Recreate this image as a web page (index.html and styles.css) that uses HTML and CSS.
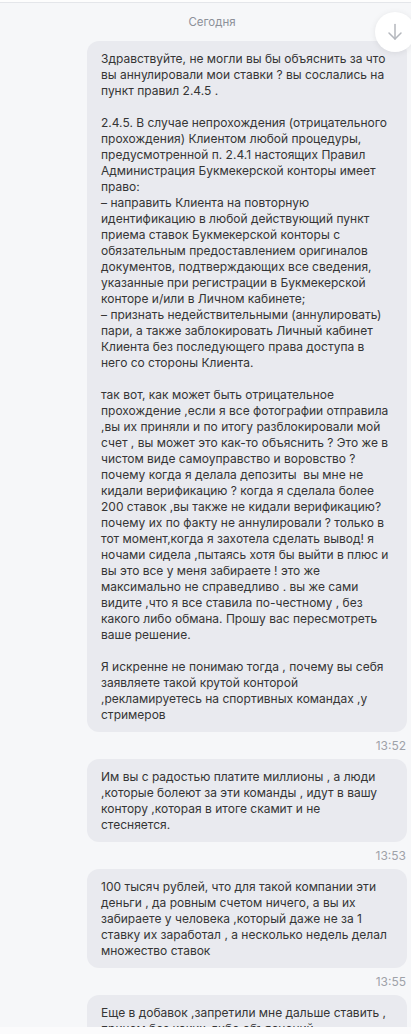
FILE: index.html
```
<!DOCTYPE html>
<html lang="ru">
<head>
	<meta charset="utf-8"/>
	<title>Чат поддержки</title>
	<meta name="viewport" content="width=411"/>
	<link rel="stylesheet" href="styles.css">
</head>
<body>
	<div id="chat">
		<div id="topline"></div>
		<div id="feed">
			<div class="day">Сегодня</div>
			<div id="tobottom">
				<svg width="16" height="18" viewBox="0 0 16 18" fill="none" stroke="#b4b7bd" stroke-width="1.5" stroke-linecap="round" stroke-linejoin="round">
					<path d="M8 1.5 V16"/>
					<path d="M2 10 L8 16 L14 10"/>
				</svg>
			</div>

			<div class="msg">
				<div class="bubble">
					<p>Здравствуйте, не могли вы бы объяснить за что вы аннулировали мои ставки ? вы сослались на пункт правил 2.4.5 .</p>
					<p>2.4.5. В случае непрохождения (отрицательного прохождения) Клиентом любой процедуры, предусмотренной п. 2.4.1 настоящих Правил Администрация Букмекерской конторы имеет право:<br/>– направить Клиента на повторную идентификацию в любой действующий пункт приема ставок Букмекерской конторы с обязательным предоставлением оригиналов документов, подтверждающих все сведения, указанные при регистрации в Букмекерской конторе и/или в Личном кабинете;<br/>– признать недействительными (аннулировать) пари, а также заблокировать Личный кабинет Клиента без последующего права доступа в него со стороны Клиента.</p>
					<p>так вот, как может быть отрицательное прохождение ,если я все фотографии отправила ,вы их приняли и по итогу разблокировали мой счет , вы может это как-то объяснить ? Это же в чистом виде самоуправство и воровство ? почему когда я делала депозиты&nbsp; вы мне не кидали верификацию ? когда я сделала более 200 ставок ,вы также не кидали верификацию? почему их по факту не аннулировали ? только в тот момент,когда я захотела сделать вывод! я ночами сидела ,пытаясь хотя бы выйти в плюс и вы это все у меня забираете ! это же максимально не справедливо . вы же сами видите ,что я все ставила по-честному , без какого либо обмана. Прошу вас пересмотреть ваше решение.</p>
					<p>Я искренне не понимаю тогда , почему вы себя заявляете такой крутой конторой ,рекламируетесь на спортивных командах ,у стримеров</p>
				</div>
				<div class="time">13:52</div>
			</div>

			<div class="msg">
				<div class="bubble">
					<p>Им вы с радостью платите миллионы , а люди ,которые болеют за эти команды , идут в вашу контору ,которая в итоге скамит и не стесняется.</p>
				</div>
				<div class="time">13:53</div>
			</div>

			<div class="msg">
				<div class="bubble">
					<p>100 тысяч рублей, что для такой компании эти деньги , да ровным счетом ничего, а вы их забираете у человека ,который даже не за 1 ставку их заработал , а несколько недель делал множество ставок</p>
				</div>
				<div class="time">13:55</div>
			</div>

			<div class="msg">
				<div class="bubble">
					<p>Еще в добавок ,запретили мне дальше ставить , причем без каких-либо объяснений .</p>
				</div>
			</div>
		</div>
		<div id="composer"></div>
	</div>
</body>
</html>
```

FILE: styles.css
```
body {
	margin: 0px;
	background-color: #f6f7f9;
	font-family: Inter, "Noto Sans", Arial, sans-serif;
	color: #353535;
}
#chat {
	height: 1034px;
	display: flex;
	flex-direction: column;
}
#topline {
	height: 2px;
	background-color: #fdfdfd;
	border-bottom: 1px solid #e4e6ea;
	flex-shrink: 0;
}
#feed {
	position: relative;
	height: 1024px;
	flex-shrink: 0;
	overflow: hidden;
	padding: 0px 4px 0px 0px;
	display: flex;
	flex-direction: column;
	align-items: flex-end;
}
#composer {
	flex: 1;
	background-color: #fbfbfc;
}
.day {
	align-self: stretch;
	text-align: center;
	padding: 12px 0px 0px 17px;
	font-size: 11.5px;
	line-height: 14px;
	color: #8d9199;
}
#tobottom {
	position: absolute;
	top: 9px;
	right: -4px;
	width: 40px;
	height: 40px;
	border-radius: 50%;
	background-color: #fff;
	box-shadow: 0px 1px 6px rgba(0, 0, 0, 0.08);
	display: flex;
	align-items: center;
	justify-content: center;
}
.msg {
	width: 320px;
	margin-top: 12px;
	flex-shrink: 0;
}
.msg + .msg {
	margin-top: 6px;
}
.bubble {
	background-color: #e9eaef;
	border-radius: 12px;
	padding: 10px 17px 9px 14px;
	font-size: 12px;
	line-height: 16px;
}
.bubble p {
	margin: 0px 0px 16px 0px;
}
.bubble p:last-child {
	margin-bottom: 0px;
}
.time {
	text-align: right;
	font-size: 12px;
	line-height: 14px;
	color: #9ea2a9;
	margin-top: 7px;
	padding-right: 1px;
}
```
